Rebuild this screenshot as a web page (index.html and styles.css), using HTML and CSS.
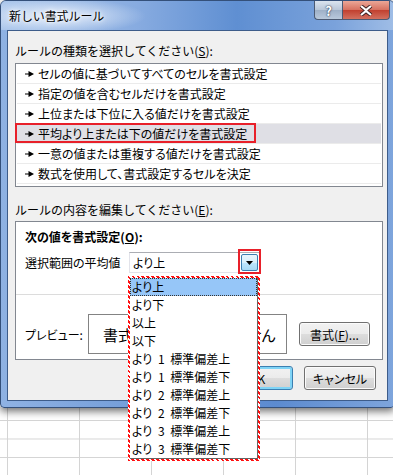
FILE: index.html
```html
<!DOCTYPE html>
<html lang="ja">
<head>
    <meta charset="UTF-8">
    <title>新しい書式ルール</title>
    <link rel="stylesheet" href="styles.css">
</head>
<body>

<div class="dialog">
    <!-- タイトルバー -->
    <div class="titlebar">
        <span class="title">新しい書式ルール</span>
        <div class="caption-btns">
            <span class="cap-help">?</span>
            <span class="cap-close">
                <svg width="14" height="11" viewBox="0 0 14 11">
                    <path d="M2 1l5 4 5-4M2 10l5-4 5 4" stroke="#3a2020" stroke-width="4" fill="none"/>
                    <path d="M2 1l5 4 5-4M2 10l5-4 5 4" stroke="#fff" stroke-width="2.2" fill="none"/>
                </svg>
            </span>
        </div>
    </div>

    <div class="client">
        <div class="label">ルールの種類を選択してください(<u>S</u>):</div>
        <ul class="rule-list">
            <li><svg class="arrow" viewBox="0 0 9 6"><path d="M0 2.5h4v1H0z M3.5 0L9 3 3.5 6z"/></svg>セルの値に基づいてすべてのセルを書式設定</li>
            <li><svg class="arrow" viewBox="0 0 9 6"><path d="M0 2.5h4v1H0z M3.5 0L9 3 3.5 6z"/></svg>指定の値を含むセルだけを書式設定</li>
            <li><svg class="arrow" viewBox="0 0 9 6"><path d="M0 2.5h4v1H0z M3.5 0L9 3 3.5 6z"/></svg>上位または下位に入る値だけを書式設定</li>
            <li class="selected"><svg class="arrow" viewBox="0 0 9 6"><path d="M0 2.5h4v1H0z M3.5 0L9 3 3.5 6z"/></svg>平均より上または下の値だけを書式設定<span class="mark-box"></span></li>
            <li><svg class="arrow" viewBox="0 0 9 6"><path d="M0 2.5h4v1H0z M3.5 0L9 3 3.5 6z"/></svg>一意の値または重複する値だけを書式設定</li>
            <li><svg class="arrow" viewBox="0 0 9 6"><path d="M0 2.5h4v1H0z M3.5 0L9 3 3.5 6z"/></svg>数式を使用して、書式設定するセルを決定</li>
        </ul>

        <div class="label label-edit">ルールの内容を編集してください(<u>E</u>):</div>
        <div class="panel">
            <div class="panel-head">次の値を書式設定(<u>O</u>):</div>
            <div class="cond-row">
                <span class="cond-label">選択範囲の平均値</span>
                <div class="combo">
                    <span class="combo-text">より上</span>
                    <span class="combo-btn">
                        <svg width="7" height="4" viewBox="0 0 7 4"><path d="M0 0h7L3.5 4z"/></svg>
                    </span>
                </div>
            </div>
            <div class="panel-sep"></div>
            <div class="preview-row">
                <span class="preview-label">プレビュー:</span>
                <div class="preview">書式が設定されていません</div>
                <button class="btn btn-format">書式(<u>F</u>)...</button>
            </div>
        </div>

        <div class="footer">
            <button class="btn btn-default">OK</button>
            <button class="btn">キャンセル</button>
        </div>
    </div>

    <!-- 開いたドロップダウン -->
    <div class="dd-mark">
        <ul class="dropdown">
            <li class="active">より上</li>
            <li>より下</li>
            <li>以上</li>
            <li>以下</li>
            <li>より 1 標準偏差上</li>
            <li>より 1 標準偏差下</li>
            <li>より 2 標準偏差上</li>
            <li>より 2 標準偏差下</li>
            <li>より 3 標準偏差上</li>
            <li>より 3 標準偏差下</li>
        </ul>
    </div>
</div>

</body>
</html>
```

FILE: styles.css
```css
/* 背景のワークシート */
html, body {
    margin: 0;
    width: 393px;
    height: 475px;
    overflow: hidden;
}
body {
    background-color: #fff;
    background-image:
        linear-gradient(to right, #d4d4d4 1px, transparent 1px),
        linear-gradient(to bottom, #d4d4d4 1px, transparent 1px);
    background-size: 72px 100%, 100% 18.5px;
    background-position: 7px 0, 0 420px;
    font-family: "Noto Sans CJK JP", sans-serif;
    font-size: 12px;
    line-height: 15px;
    color: #000;
}

/* ダイアログ枠 */
.dialog {
    position: relative;
    width: 395px;
    height: 408px;
    box-sizing: border-box;
    border: 1px solid #34507a;
    border-radius: 6px 6px 4px 4px;
    background: linear-gradient(to right, #8fb2e3, #6f9ad8 40%, #5c8bd0 70%, #7ea5dc);
    box-shadow: 0 3px 9px rgba(0, 0, 0, 0.6);
}
.titlebar {
    height: 29px;
    display: flex;
    justify-content: space-between;
    align-items: flex-start;
    padding: 0 4px 0 8px;
    background:
        radial-gradient(ellipse 90px 18px at 55px 15px, rgba(235, 242, 252, 0.95), rgba(235, 242, 252, 0) 100%),
        linear-gradient(to right, #a9c5ea, #87abe0 35%, #5f8fd2 60%, #7aa2db 85%, #9fbde6);
    border-radius: 5px 5px 0 0;
}
.title {
    margin-top: 7px;
    letter-spacing: -0.1px;
    text-shadow: 0 0 6px #fff, 0 0 3px #fff;
}
.caption-btns {
    display: flex;
}
.cap-help, .cap-close {
    height: 19px;
    box-sizing: border-box;
    display: flex;
    align-items: center;
    justify-content: center;
    border: 1px solid #4b5a73;
    border-top: none;
}
.cap-help {
    width: 28px;
    border-right: none;
    border-radius: 0 0 0 4px;
    background: linear-gradient(#dbe4ef, #b8c6d8 50%, #9eb0c7 51%, #b9c9dc);
    color: #fff;
    font-weight: bold;
    font-size: 13px;
    text-shadow: 0 0 2px #2c3a52, 0 0 1px #2c3a52;
}
.cap-close {
    width: 48px;
    border-radius: 0 0 4px 0;
    background: linear-gradient(#eba797, #d6705f 50%, #c1402f 51%, #d2705f);
}

/* クライアント領域 */
.client {
    margin: 0 6px 0 6px;
    height: 371px;
    box-sizing: border-box;
    border: 1px solid #3d5c8a;
    background: #f0f0f0;
    padding: 12px 4px 8px 7px;
}
.label {
    height: 15px;
}
.label-edit {
    margin-top: 15px;
}
.rule-list {
    list-style: none;
    margin: 5px 0 0;
    padding: 0 1px 2px;
    border: 1px solid #828790;
    background: #fff;
}
.rule-list li {
    position: relative;
    height: 20px;
    box-sizing: border-box;
    display: flex;
    align-items: center;
    padding-left: 8px;
    border-bottom: 1px solid #ebebeb;
    font-feature-settings: "palt";
}
.rule-list li.selected {
    background: #dfdfe5;
}
.arrow {
    width: 9px;
    height: 6px;
    margin-right: 4px;
    fill: #000;
}
.mark-box {
    position: absolute;
    left: -2px;
    top: -1px;
    width: 241px;
    height: 20px;
    box-sizing: border-box;
    border: 2px solid #e8202a;
}

/* ルールの内容 */
.panel {
    margin-top: 4px;
    border: 1px solid #828790;
    background: #fff;
    padding: 7px 0 5px;
    font-feature-settings: "palt";
}
.panel-head {
    padding-left: 9px;
    font-weight: bold;
}
.cond-row {
    display: flex;
    align-items: center;
    margin-top: 8px;
    padding-left: 9px;
}
.cond-label {
    width: 104px;
}
.combo {
    position: relative;
    width: 132px;
    height: 21px;
    box-sizing: border-box;
    display: flex;
    align-items: center;
    justify-content: space-between;
    border: 1px solid #e2e3ea;
    border-top-color: #abadb3;
}
.combo-text {
    padding-left: 3px;
}
.combo-btn {
    position: relative;
    width: 17px;
    height: 17px;
    box-sizing: border-box;
    margin-right: 2px;
    display: flex;
    align-items: center;
    justify-content: center;
    border: 1px solid #3c7fb1;
    border-radius: 2px;
    background: linear-gradient(#eaf6fd, #d9f0fc 50%, #bee6fd 51%, #a7d9f5);
}
.combo-btn::after {
    content: "";
    position: absolute;
    left: -4px;
    top: -6px;
    width: 23px;
    height: 25px;
    box-sizing: border-box;
    border: 2px solid #e8202a;
}
.panel-sep {
    margin-top: 21px;
    height: 1px;
    background: #dcdcdc;
}
.preview-row {
    display: flex;
    align-items: center;
    margin-top: 19px;
    padding-left: 9px;
}
.preview-label {
    width: 63px;
}
.preview {
    width: 199px;
    height: 40px;
    box-sizing: border-box;
    border: 1px solid #838383;
    padding-left: 14px;
    display: flex;
    align-items: center;
    font-size: 15px;
    white-space: nowrap;
    overflow: hidden;
}
.btn-format {
    margin-left: 12px;
    width: 71px;
}

/* ボタン */
.btn {
    height: 24px;
    box-sizing: border-box;
    padding: 0;
    font-family: inherit;
    font-size: 12px;
    color: #000;
    border: 1px solid #707070;
    border-radius: 3px;
    background: linear-gradient(#f2f2f2, #ebebeb 50%, #dddddd 51%, #cfcfcf);
    box-shadow: inset 0 0 0 1px #fbfbfb;
    font-feature-settings: "palt";
}
.btn-default {
    border-color: #3c7fb1;
    box-shadow: inset 0 0 0 2px #7fd4f6;
}
.footer {
    display: flex;
    justify-content: flex-end;
    gap: 11px;
    margin-top: 6px;
    padding-right: 7px;
}
.footer .btn {
    width: 72px;
}

/* ドロップダウン一覧（赤い点線で囲む） */
.dd-mark {
    position: absolute;
    left: 127px;
    top: 275px;
    border: 2px solid transparent;
    border-image: repeating-linear-gradient(45deg, #ff1010 0 2px, #fff 2px 3.5px) 2;
    background: #fff;
    z-index: 2;
}
.dropdown {
    list-style: none;
    margin: 0;
    padding: 0;
    width: 127px;
    border-right: 1px solid #646464;
    border-bottom: 1px solid #646464;
    font-feature-settings: "palt";
}
.dropdown li {
    height: 18px;
    line-height: 18px;
    padding-left: 2px;
    white-space: nowrap;
    word-spacing: 3px;
}
.dropdown li.active {
    background: #96c6f8;
    outline: 1px dotted #333;
    outline-offset: -1px;
}
```
